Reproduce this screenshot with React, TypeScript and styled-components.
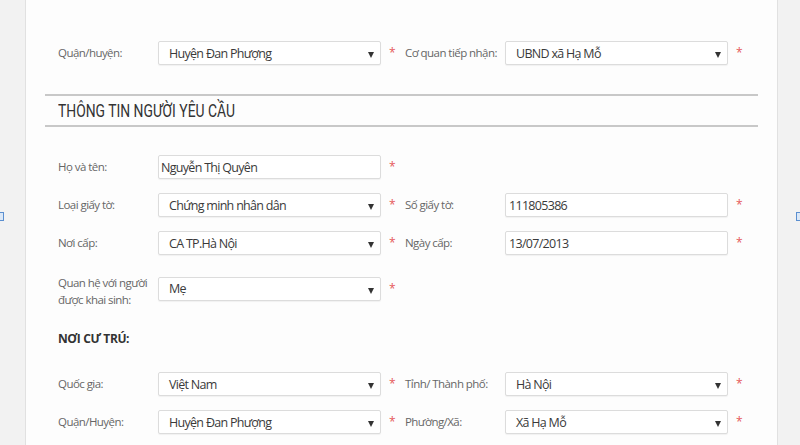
import React from 'react';
import styled, { createGlobalStyle } from 'styled-components';

const Global = createGlobalStyle`
  html, body { margin: 0; padding: 0; }
  body {
    width: 800px;
    height: 445px;
    overflow: hidden;
    background: #f2f2f2;
    font-family: "Open Sans", "Noto Sans", sans-serif;
  }
`;

const Page = styled.div`
  display: flex;
  height: 445px;
`;

const Gutter = styled.div<{ $side: 'left' | 'right' }>`
  position: relative;
  flex: none;
  width: ${(p) => (p.$side === 'left' ? 25 : 22)}px;
  background: #f2f2f2;
  ${(p) => (p.$side === 'left' ? 'border-right' : 'border-left')}: 1px solid #e1e1e1;
`;

const EdgeMark = styled.span<{ $side: 'left' | 'right' }>`
  position: absolute;
  top: 212px;
  ${(p) => (p.$side === 'left' ? 'left: -2px;' : 'right: -2px;')}
  width: 4px;
  height: 7px;
  border: 1px solid #5b8fd0;
  background: #dbe8f7;
`;

const Panel = styled.main`
  flex: 1;
  background: #fdfdfd;
  padding-top: 41px;
`;

const FormGrid = styled.div<{ $top?: number }>`
  display: grid;
  grid-template-columns: 100px 223px 24px 100px 223px 24px;
  row-gap: 14px;
  align-items: center;
  padding-left: 32px;
  margin-top: ${(p) => p.$top ?? 0}px;
`;

const Label = styled.label<{ $multi?: boolean }>`
  font-size: 11.5px;
  letter-spacing: -0.55px;
  line-height: ${(p) => (p.$multi ? 17 : 16)}px;
  margin-top: ${(p) => (p.$multi ? 5 : 0)}px;
  color: #666;
  white-space: nowrap;
`;

const FieldBox = styled.div<{ $pad: number }>`
  position: relative;
  box-sizing: border-box;
  height: 24px;
  display: flex;
  align-items: center;
  padding-left: ${(p) => p.$pad}px;
  border: 1px solid #dcdcdc;
  border-radius: 2px;
  background: #fff;
  box-shadow: 0 1px 1px rgba(0, 0, 0, 0.05);
  font-size: 12.5px;
  letter-spacing: -0.7px;
  color: #3a3a3a;
  white-space: nowrap;
`;

const Arrow = styled.span`
  position: absolute;
  right: 6px;
  top: 10px;
  width: 0;
  height: 0;
  border-left: 3.5px solid transparent;
  border-right: 3.5px solid transparent;
  border-top: 6px solid #333;
`;

const Star = styled.span`
  padding-left: 8px;
  font-size: 12px;
  color: #e55a5a;
  line-height: 16px;
`;

const SectionHeader = styled.div`
  margin: 29px 19px 0 19px;
  border-top: 2px solid #c8c8c8;
  border-bottom: 2px solid #c8c8c8;
  height: 29px;
  display: flex;
  align-items: center;
  padding-left: 13px;
`;

const HeaderText = styled.h2`
  margin: 0;
  font-family: Roboto, "Noto Sans", sans-serif;
  font-weight: 400;
  font-size: 19px;
  color: #333;
  white-space: nowrap;
  transform: scaleX(0.73);
  transform-origin: left center;
`;

const SubHeading = styled.div`
  padding-left: 32px;
  margin-top: 23px;
  font-size: 12px;
  letter-spacing: -0.4px;
  line-height: 16px;
  font-weight: 700;
  color: #333;
`;

const Field = ({ value, select, pad }: { value: string; select?: boolean; pad?: number }) => (
  <FieldBox $pad={pad ?? (select ? 10 : 2)}>
    {value}
    {select && <Arrow />}
  </FieldBox>
);

const Empty = styled.span``;

export default function App() {
  return (
    <>
      <Global />
      <Page>
        <Gutter $side="left">
          <EdgeMark $side="left" />
        </Gutter>
        <Panel>
          <FormGrid>
            <Label>Quận/huyện:</Label>
            <Field value="Huyện Đan Phượng" select />
            <Star>*</Star>
            <Label>Cơ quan tiếp nhận:</Label>
            <Field value="UBND xã Hạ Mỗ" select />
            <Star>*</Star>
          </FormGrid>

          <SectionHeader>
            <HeaderText>THÔNG TIN NGƯỜI YÊU CẦU</HeaderText>
          </SectionHeader>

          <FormGrid $top={28}>
            <Label>Họ và tên:</Label>
            <Field value="Nguyễn Thị Quyên" />
            <Star>*</Star>
            <Empty />
            <Empty />
            <Empty />

            <Label>Loại giấy tờ:</Label>
            <Field value="Chứng minh nhân dân" select />
            <Star>*</Star>
            <Label>Số giấy tờ:</Label>
            <Field value="111805386" pad={3} />
            <Star>*</Star>

            <Label>Nơi cấp:</Label>
            <Field value="CA TP.Hà Nội" select />
            <Star>*</Star>
            <Label>Ngày cấp:</Label>
            <Field value="13/07/2013" pad={3} />
            <Star>*</Star>

            <Label $multi>
              Quan hệ với người
              <br />
              được khai sinh:
            </Label>
            <Field value="Mẹ" select />
            <Star>*</Star>
            <Empty />
            <Empty />
            <Empty />
          </FormGrid>

          <SubHeading>NƠI CƯ TRÚ:</SubHeading>

          <FormGrid $top={25}>
            <Label>Quốc gia:</Label>
            <Field value="Việt Nam" select />
            <Star>*</Star>
            <Label>Tỉnh/ Thành phố:</Label>
            <Field value="Hà Nội" select />
            <Star>*</Star>

            <Label>Quận/Huyện:</Label>
            <Field value="Huyện Đan Phượng" select />
            <Star>*</Star>
            <Label>Phường/Xã:</Label>
            <Field value="Xã Hạ Mỗ" select />
            <Star>*</Star>
          </FormGrid>
        </Panel>
        <Gutter $side="right">
          <EdgeMark $side="right" />
        </Gutter>
      </Page>
    </>
  );
}
